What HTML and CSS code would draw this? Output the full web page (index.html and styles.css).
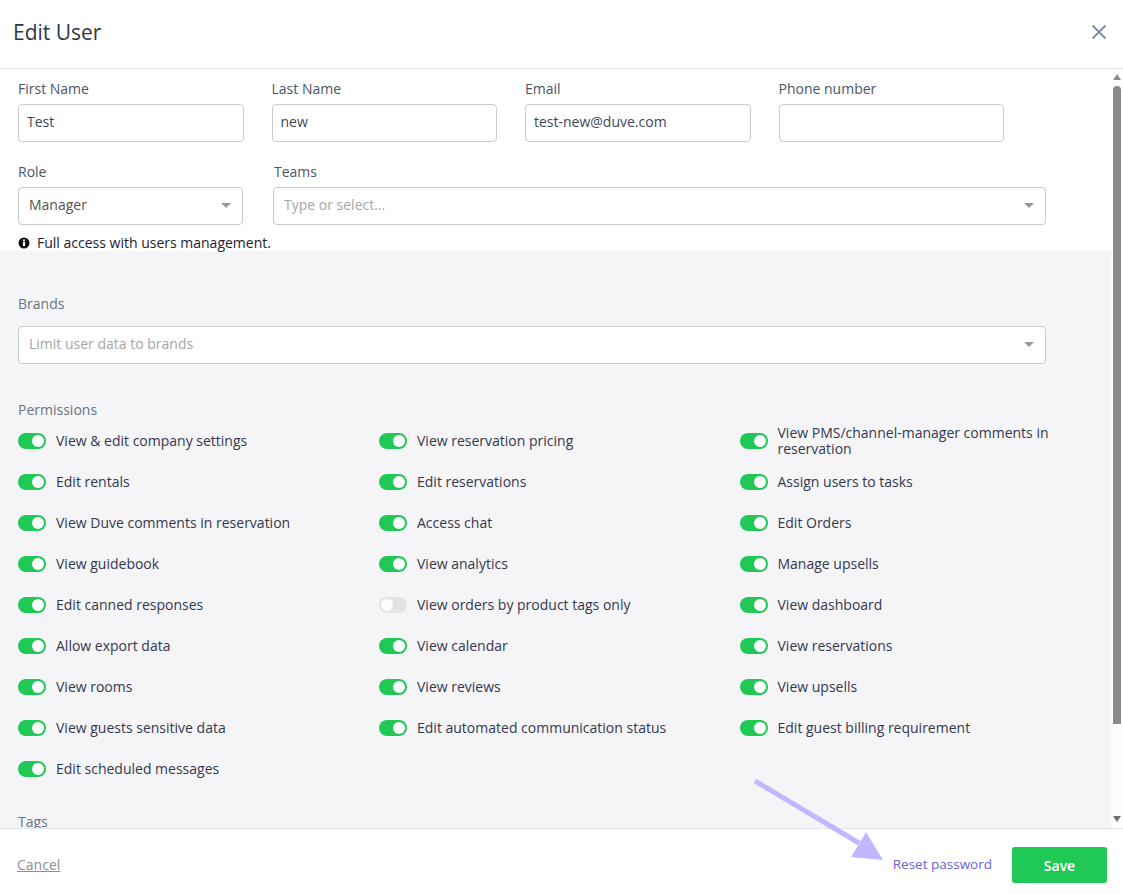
FILE: index.html
```html
<!DOCTYPE html>
<html lang="en">
<head>
  <meta charset="UTF-8" />
  <meta name="viewport" content="width=device-width, initial-scale=1.0"/>
  <title>Edit User</title>
  <link rel="stylesheet" href="styles.css">
</head>
<body>
  <div class="modal">

    <header class="modal-header">
      <h1>Edit User</h1>
      <svg class="close-icon" width="16" height="16" viewBox="0 0 16 16">
        <path d="M1.5 1.5 L14.5 14.5 M14.5 1.5 L1.5 14.5" />
      </svg>
    </header>

    <div class="modal-body">
      <div class="scroll-content">

        <div class="user-form">
          <div class="field-row">
            <div class="field field-name">
              <label>First Name</label>
              <div class="input">Test</div>
            </div>
            <div class="field field-name">
              <label>Last Name</label>
              <div class="input">new</div>
            </div>
            <div class="field field-name">
              <label>Email</label>
              <div class="input">test-new@duve.com</div>
            </div>
            <div class="field field-name">
              <label>Phone number</label>
              <div class="input"></div>
            </div>
          </div>

          <div class="field-row role-row">
            <div class="field field-role">
              <label>Role</label>
              <div class="input select">Manager <span class="caret"></span></div>
            </div>
            <div class="field field-teams">
              <label>Teams</label>
              <div class="input select placeholder">Type or select... <span class="caret"></span></div>
            </div>
          </div>

          <div class="role-note">
            <svg width="12" height="12" viewBox="0 0 12 12">
              <circle cx="6" cy="6" r="5.5" fill="#111" />
              <rect x="5" y="5" width="2" height="4" fill="#fff" />
              <rect x="5" y="2.6" width="2" height="1.6" fill="#fff" />
            </svg>
            Full access with users management.
          </div>
        </div>

        <div class="gray-section">
          <div class="field field-brands">
            <label>Brands</label>
            <div class="input select placeholder">Limit user data to brands <span class="caret"></span></div>
          </div>

          <div class="section-label">Permissions</div>
          <div class="permissions">
            <div class="perm"><span class="toggle"></span>View &amp; edit company settings</div>
            <div class="perm"><span class="toggle"></span>View reservation pricing</div>
            <div class="perm"><span class="toggle"></span>View PMS/channel-manager comments in reservation</div>

            <div class="perm"><span class="toggle"></span>Edit rentals</div>
            <div class="perm"><span class="toggle"></span>Edit reservations</div>
            <div class="perm"><span class="toggle"></span>Assign users to tasks</div>

            <div class="perm"><span class="toggle"></span>View Duve comments in reservation</div>
            <div class="perm"><span class="toggle"></span>Access chat</div>
            <div class="perm"><span class="toggle"></span>Edit Orders</div>

            <div class="perm"><span class="toggle"></span>View guidebook</div>
            <div class="perm"><span class="toggle"></span>View analytics</div>
            <div class="perm"><span class="toggle"></span>Manage upsells</div>

            <div class="perm"><span class="toggle"></span>Edit canned responses</div>
            <div class="perm"><span class="toggle off"></span>View orders by product tags only</div>
            <div class="perm"><span class="toggle"></span>View dashboard</div>

            <div class="perm"><span class="toggle"></span>Allow export data</div>
            <div class="perm"><span class="toggle"></span>View calendar</div>
            <div class="perm"><span class="toggle"></span>View reservations</div>

            <div class="perm"><span class="toggle"></span>View rooms</div>
            <div class="perm"><span class="toggle"></span>View reviews</div>
            <div class="perm"><span class="toggle"></span>View upsells</div>

            <div class="perm"><span class="toggle"></span>View guests sensitive data</div>
            <div class="perm"><span class="toggle"></span>Edit automated communication status</div>
            <div class="perm"><span class="toggle"></span>Edit guest billing requirement</div>

            <div class="perm"><span class="toggle"></span>Edit scheduled messages</div>
          </div>

          <div class="section-label tags-label">Tags</div>
        </div>
      </div>

      <div class="scrollbar">
        <span class="scroll-arrow up"></span>
        <span class="scroll-thumb"></span>
        <span class="scroll-arrow down"></span>
      </div>
    </div>

    <footer class="modal-footer">
      <a href="#" class="cancel">Cancel</a>
      <a href="#" class="reset">Reset password</a>
      <button class="save">Save</button>
    </footer>

    <svg class="arrow" width="140" height="90" viewBox="0 0 140 90">
      <path d="M2 3 L106 65" stroke="#bfb8ff" stroke-width="5" fill="none" />
      <path d="M113 54 L130 82 L98 79 Z" fill="#bfb8ff" />
    </svg>
  </div>
</body>
</html>
```

FILE: styles.css
```css
* {
  box-sizing: border-box;
}

body {
  margin: 0;
  font-family: 'Open Sans', sans-serif;
  font-size: 14px;
  color: #4a5568;
  background-color: white;
}

.modal {
  position: relative;
  height: 895px;
  display: flex;
  flex-direction: column;
  overflow: hidden;
}

.modal-header {
  height: 69px;
  flex-shrink: 0;
  display: flex;
  justify-content: space-between;
  align-items: center;
  padding: 0 16px 5px 13px;
  border-bottom: 1px solid #e2e5ea;
}

.modal-header h1 {
  margin: 0;
  font-size: 21px;
  font-weight: 400;
  color: #2d3748;
}

.close-icon path {
  stroke: #7f8ea3;
  stroke-width: 2;
  fill: none;
}

.modal-body {
  flex: 1;
  display: flex;
  min-height: 0;
}

.scroll-content {
  flex: 1;
  overflow: hidden;
}

.user-form {
  height: 182px;
  padding: 10px 18px 0;
}

.field-row {
  display: flex;
  gap: 28px;
}

.role-row {
  margin-top: 20px;
  gap: 30px;
}

label {
  display: block;
  height: 25px;
  line-height: 20px;
  color: #4a5568;
}

.field-name {
  width: 225.5px;
}

.field-role {
  width: 225px;
}

.field-teams {
  width: 773px;
}

.field-teams label {
  padding-left: 1px;
}

.field-brands {
  width: 1028px;
}

.input {
  position: relative;
  height: 38px;
  line-height: 34px;
  padding: 0 8px;
  background-color: white;
  border: 1px solid #cbcbcb;
  border-radius: 4px;
  color: #3d4759;
}

.select {
  padding: 0 10px;
  color: #555;
}

.placeholder {
  color: #a6a6a6;
}

.caret {
  position: absolute;
  right: 11px;
  top: 15px;
  border-left: 5px solid transparent;
  border-right: 5px solid transparent;
  border-top: 5px solid #999;
}

.role-note {
  display: flex;
  align-items: center;
  gap: 7px;
  margin-top: 8px;
  line-height: 20px;
  color: #1c2330;
}

.gray-section {
  background-color: #f5f5f8;
  padding: 43px 18px 0;
  height: 578px;
}

.gray-section label {
  height: 32px;
  color: #6b7280;
}

.section-label {
  margin-top: 36px;
  line-height: 20px;
  color: #6b7280;
}

.permissions {
  display: grid;
  grid-template-columns: 361px 360.5px 330px;
  row-gap: 9px;
  margin-top: 5px;
}

.perm {
  display: flex;
  align-items: center;
  min-height: 32px;
  line-height: 16px;
  color: #33384d;
}

.toggle {
  position: relative;
  flex-shrink: 0;
  width: 28px;
  height: 16px;
  margin-right: 10px;
  border-radius: 8px;
  background-color: #20c956;
}

.toggle::after {
  content: "";
  position: absolute;
  top: 2px;
  right: 2px;
  width: 12px;
  height: 12px;
  border-radius: 50%;
  background-color: white;
}

.toggle.off {
  background-color: #e3e3e6;
}

.toggle.off::after {
  right: auto;
  left: 2px;
}

.tags-label {
  margin-top: 27px;
}

.scrollbar {
  width: 12px;
  flex-shrink: 0;
  display: flex;
  flex-direction: column;
  align-items: center;
  background-color: #fdfdfd;
  padding-top: 5px;
}

.scroll-arrow {
  border-left: 4px solid transparent;
  border-right: 4px solid transparent;
}

.scroll-arrow.up {
  border-bottom: 6px solid #8a8a8a;
}

.scroll-arrow.down {
  margin-top: 92px;
  border-top: 6px solid #707070;
}

.scroll-thumb {
  width: 8px;
  height: 638px;
  margin-top: 6px;
  border-radius: 4px 4px 0 0;
  background-color: #8a8a8a;
}

.modal-footer {
  height: 67px;
  flex-shrink: 0;
  display: flex;
  align-items: center;
  padding: 6px 16px 0 17px;
  border-top: 1px solid #e2e5ea;
}

.cancel {
  color: #8b8f99;
  margin-right: auto;
  margin-bottom: 2px;
}

.reset {
  color: #6a62d6;
  font-size: 13.5px;
  text-decoration: none;
  margin-right: 20px;
  margin-bottom: 2px;
}

.save {
  width: 95px;
  height: 36px;
  border: 0;
  border-radius: 3px;
  background-color: #20c956;
  color: white;
  font-family: inherit;
  font-size: 14px;
  font-weight: 600;
}

.arrow {
  position: absolute;
  left: 753px;
  top: 778px;
}
```
